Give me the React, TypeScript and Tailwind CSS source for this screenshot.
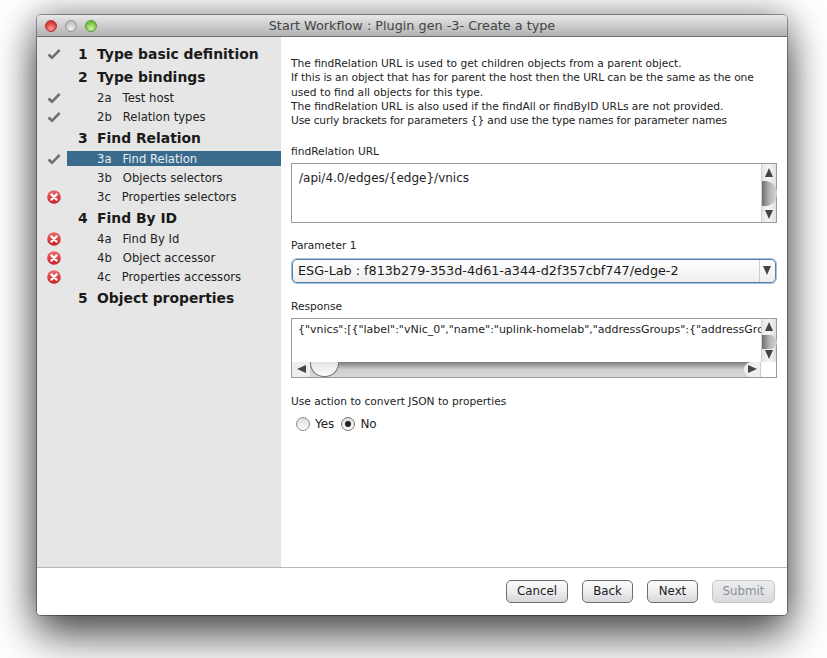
import type { ReactNode } from 'react';

type Status = 'ok' | 'error' | null;

interface Step {
  label: string;
  heading?: string;
  status: Status;
  selected?: boolean;
}

const steps: Step[] = [
  { heading: '1', label: 'Type basic definition', status: 'ok' },
  { heading: '2', label: 'Type bindings', status: null },
  { label: '2a   Test host', status: 'ok' },
  { label: '2b   Relation types', status: 'ok' },
  { heading: '3', label: 'Find Relation', status: null },
  { label: '3a   Find Relation', status: 'ok', selected: true },
  { label: '3b   Objects selectors', status: null },
  { label: '3c   Properties selectors', status: 'error' },
  { heading: '4', label: 'Find By ID', status: null },
  { label: '4a   Find By Id', status: 'error' },
  { label: '4b   Object accessor', status: 'error' },
  { label: '4c   Properties accessors', status: 'error' },
  { heading: '5', label: 'Object properties', status: null },
];

function StatusIcon({ status }: { status: Status }) {
  if (status === 'ok') {
    return (
      <svg width="14" height="12" viewBox="0 0 14 12">
        <path d="M1.5 6.5 L5 9.8 L12.6 2" fill="none" stroke="#6f6f6f" strokeWidth="2.6" />
      </svg>
    );
  }
  if (status === 'error') {
    return (
      <svg width="14" height="14" viewBox="0 0 14 14">
        <defs>
          <linearGradient id="err" x1="0" y1="0" x2="0" y2="1">
            <stop offset="0" stopColor="#ee6a6a" />
            <stop offset="1" stopColor="#c81e26" />
          </linearGradient>
        </defs>
        <circle cx="7" cy="7" r="6.8" fill="url(#err)" />
        <path d="M4.4 4.4 L9.6 9.6 M9.6 4.4 L4.4 9.6" stroke="#fff" strokeWidth="2.2" strokeLinecap="round" />
      </svg>
    );
  }
  return null;
}

function StepRow({ step }: { step: Step }) {
  return (
    <div className={step.heading ? 'flex h-[23px] items-center' : 'flex h-[19px] items-center'}>
      <div className="flex w-[30px] shrink-0 justify-center pl-[4px]">
        <StatusIcon status={step.status} />
      </div>
      {step.heading ? (
        <div className="flex items-center pt-[1px] text-[13.9px] font-bold text-[#1a1a1a]">
          <span className="w-[30px] pl-[11px]">{step.heading}</span>
          <span>{step.label}</span>
        </div>
      ) : (
        <div
          className={
            step.selected
              ? 'flex h-[15px] flex-1 items-center bg-[#3a6a8c] pl-[30px] pt-[2px] text-[11.6px] text-[#e8eef2] whitespace-pre'
              : 'flex h-[15px] flex-1 items-center pl-[30px] pt-[2px] text-[11.6px] text-[#222] whitespace-pre'
          }
        >
          {step.label}
        </div>
      )}
    </div>
  );
}

function Arrow({ dir }: { dir: 'up' | 'down' | 'left' | 'right' }) {
  const points = {
    up: '4,0 8,9 0,9',
    down: '0,0 8,0 4,9',
    left: '0,4 9,0 9,8',
    right: '9,4 0,0 0,8',
  }[dir];
  return (
    <svg width="9" height="9" viewBox="0 0 9 9">
      <polygon points={points} fill="#444" />
    </svg>
  );
}

function VScroll({ children }: { children?: ReactNode }) {
  return (
    <div className="flex w-[15px] shrink-0 flex-col items-center border-l border-[#d0d0d0] bg-gradient-to-r from-[#e4e6ea] via-[#f4f5f7] to-[#dfe1e5]">
      {children}
    </div>
  );
}

function Button({ label, width, disabled }: { label: string; width: string; disabled?: boolean }) {
  return (
    <div
      className={
        disabled
          ? `flex h-[23px] ${width} items-center justify-center rounded-[5px] border border-[#c4c6ca] bg-gradient-to-b from-[#eceef1] to-[#d8dade] pt-[1px] text-[#8e9095]`
          : `flex h-[23px] ${width} items-center justify-center rounded-[5px] border border-[#6e6e6e] bg-gradient-to-b from-[#fbfbfb] via-[#eeeeee] to-[#d3d6dc] pt-[1px] text-[#1a1a1a]`
      }
    >
      {label}
    </div>
  );
}

export default function App() {
  return (
    <div
      className="h-[658px] w-[827px] overflow-hidden bg-white pl-[37px] pt-[15px] text-[10.65px] text-[#222]"
      style={{ fontFamily: '"DejaVu Sans", sans-serif' }}
    >
      <div className="flex h-[600px] w-[750px] flex-col overflow-hidden rounded-[4px] bg-white shadow-[0_0_0_1px_rgba(0,0,0,0.35),0_22px_44px_rgba(0,0,0,0.62),0_0_34px_rgba(0,0,0,0.38)]">
        {/* Title bar */}
        <div className="relative flex h-[22px] shrink-0 items-center justify-center border-b border-[#6f6f6f] bg-gradient-to-b from-[#e8e8e8] to-[#b2b2b2] text-[12.8px] text-[#444]">
          <div className="absolute left-[8px] top-[5px] flex gap-[8px]">
            <div className="h-[12px] w-[12px] rounded-full border border-[#a33] bg-[radial-gradient(circle_at_50%_75%,#ff9a90,#d8352e_70%)]" />
            <div className="h-[12px] w-[12px] rounded-full border border-[#999] bg-[radial-gradient(circle_at_50%_75%,#f2f2f2,#bdbdbd_70%)]" />
            <div className="h-[12px] w-[12px] rounded-full border border-[#5a9a3a] bg-[radial-gradient(circle_at_50%_75%,#d6f5a0,#6fbb3c_70%)]" />
          </div>
          Start Workflow : Plugin gen -3- Create a type
        </div>

        <div className="flex min-h-0 flex-1">
          {/* Steps */}
          <div className="w-[244px] shrink-0 bg-[#e6e6e6] pt-[5px]">
            {steps.map((step) => (
              <StepRow key={step.label} step={step} />
            ))}
          </div>

          {/* Page */}
          <div className="min-w-0 flex-1 pl-[10px] pr-[10px] pt-[20px]">
            <div className="leading-[14.35px]">
              <p>The findRelation URL is used to get children objects from a parent object.</p>
              <p className="tracking-[-0.08px]">If this is an object that has for parent the host then the URL can be the same as the one</p>
              <p>used to find all objects for this type.</p>
              <p>The findRelation URL is also used if the findAll or findByID URLs are not provided.</p>
              <p className="tracking-[-0.15px]">Use curly brackets for parameters {'{}'} and use the type names for parameter names</p>
            </div>

            <div className="mt-[16px] h-[14px] leading-[14px]">findRelation URL</div>
            <div className="mt-[4px] flex h-[60px] border border-[#999]">
              <div className="min-w-0 flex-1 pl-[7px] pt-[5px] text-[12px]">/api/4.0/edges/{'{edge}'}/vnics</div>
              <VScroll>
                <div className="mt-[4px] h-[9px]"><Arrow dir="up" /></div>
                <div className="mt-[4px] h-[25px] w-[15px] rounded-r-[12px] bg-gradient-to-r from-[#6e6e6e] via-[#b4b4b4] to-[#d6d6d6]" />
                <div className="mt-[4px] h-[9px]"><Arrow dir="down" /></div>
              </VScroll>
            </div>

            <div className="mt-[16px] h-[14px] leading-[14px]">Parameter 1</div>
            <div className="ml-[1px] mt-[6px] flex h-[24px] w-[484px] rounded-[5px] border border-[#5f7f9f] bg-gradient-to-b from-white to-[#eeeeee] shadow-[0_0_0_1px_#9cc3e6]">
              <div className="flex min-w-0 flex-1 items-center pl-[5px] text-[12.75px] text-[#1a1a1a]">
                ESG-Lab : f813b279-353d-4d61-a344-d2f357cbf747/edge-2
              </div>
              <div className="flex w-[16px] items-center justify-center border-l border-[#ccc]">
                <Arrow dir="down" />
              </div>
            </div>

            <div className="mt-[17px] h-[14px] leading-[14px]">Response</div>
            <div className="mt-[4px] flex h-[60px] flex-col border border-[#999]">
              <div className="flex min-h-0 flex-1">
                <div className="min-w-0 flex-1 overflow-hidden whitespace-nowrap pl-[6px] pt-[3px] text-[11px]">
                  {'{"vnics":[{"label":"vNic_0","name":"uplink-homelab","addressGroups":{"addressGroups":[{"primaryAddress"'}
                </div>
                <VScroll>
                  <div className="mt-[3px] h-[9px]"><Arrow dir="up" /></div>
                  <div className="mt-[4px] h-[14px] w-[15px] rounded-r-[8px] bg-gradient-to-r from-[#6e6e6e] via-[#b4b4b4] to-[#d6d6d6]" />
                  <div className="mt-[1px] h-[9px]"><Arrow dir="down" /></div>
                </VScroll>
              </div>
              <div className="flex h-[15px] shrink-0">
                <div className="flex min-w-0 flex-1 items-center bg-gradient-to-b from-[#7c7c7c] via-[#cfcfcf] to-[#d8d8d8]">
                  <div className="flex h-[15px] w-[18px] items-center justify-center bg-[#eee]"><Arrow dir="left" /></div>
                  <div className="h-[15px] w-[29px] rounded-b-[14px] border-x border-b border-[#777] bg-gradient-to-b from-[#e2e2e2] to-white" />
                  <div className="flex-1" />
                  <div className="flex h-[15px] w-[16px] items-center justify-center rounded-l-[8px] bg-[#eee]"><Arrow dir="right" /></div>
                </div>
                <div className="w-[16px] shrink-0 border-l border-[#ccc] bg-white" />
              </div>
            </div>

            <div className="mt-[17px] h-[14px] leading-[14px]">Use action to convert JSON to properties</div>
            <div className="ml-[5px] mt-[6px] flex items-center text-[12px]">
              <div className="h-[14px] w-[14px] rounded-full border border-[#8a8a8a] bg-gradient-to-b from-[#dcdcdc] to-white" />
              <span className="ml-[5px]">Yes</span>
              <div className="ml-[7px] flex h-[14px] w-[14px] items-center justify-center rounded-full border border-[#777] bg-gradient-to-b from-[#dcdcdc] to-white">
                <div className="h-[6px] w-[6px] rounded-full bg-[#222]" />
              </div>
              <span className="ml-[5px]">No</span>
            </div>
          </div>
        </div>

        {/* Footer */}
        <div className="flex h-[48px] shrink-0 items-start justify-end gap-[14px] border-t border-[#b8b8b8] bg-white pr-[12px] pt-[12px] text-[11.8px]">
          <Button label="Cancel" width="w-[62px]" />
          <Button label="Back" width="w-[51px]" />
          <Button label="Next" width="w-[51px]" />
          <Button label="Submit" width="w-[63px]" disabled />
        </div>
      </div>
    </div>
  );
}
